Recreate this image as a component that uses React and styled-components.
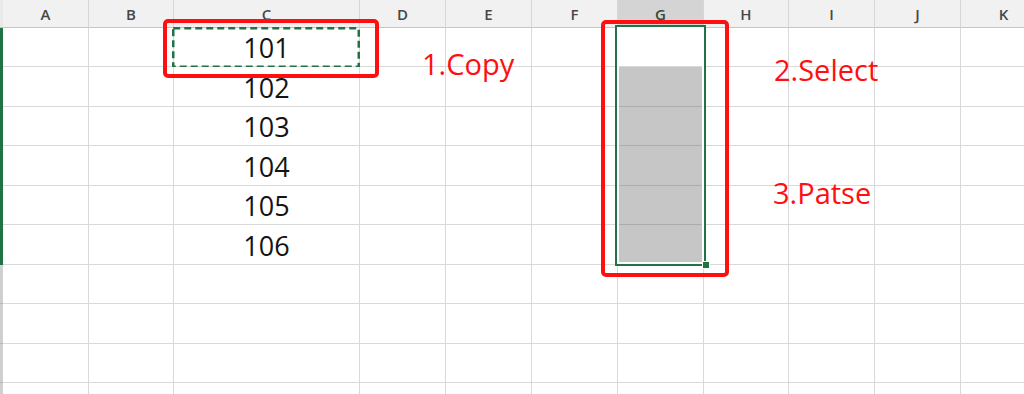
import React from 'react'
import styled, { createGlobalStyle } from 'styled-components'

const GlobalStyle = createGlobalStyle`
  html, body {
    margin: 0;
    padding: 0;
    background: #fff;
    overflow: hidden;
  }
`

const EXCEL_GREEN = '#217346'
const MARK_RED = '#ff0f0f'

const COLUMNS = [
  { key: 'A', width: 86 },
  { key: 'B', width: 85 },
  { key: 'C', width: 186 },
  { key: 'D', width: 86 },
  { key: 'E', width: 86 },
  { key: 'F', width: 86 },
  { key: 'G', width: 86 },
  { key: 'H', width: 85 },
  { key: 'I', width: 86 },
  { key: 'J', width: 86 },
  { key: 'K', width: 86 },
]

const ROW_HEIGHTS = [39, 40, 39, 40, 39, 40, 39, 40, 39, 40]

const VALUES = { C: [101, 102, 103, 104, 105, 106] }

// cells of column G under the selection, below the active cell
const SHADED_ROWS = [1, 2, 3, 4, 5]

const NOTES = [
  { text: '1.Copy', left: 422, top: 49 },
  { text: '2.Select', left: 774, top: 55 },
  { text: '3.Patse', left: 773, top: 178 },
]

const Sheet = styled.div`
  position: relative;
  display: grid;
  grid-template-columns: 3px ${COLUMNS.map(c => `${c.width}px`).join(' ')};
  grid-template-rows: 28px ${ROW_HEIGHTS.map(h => `${h}px`).join(' ')};
  width: max-content;
  height: 394px;
  overflow: hidden;
`

const Corner = styled.div`
  background: #e9e9e9;
  border-bottom: 1px solid #c6c6c6;
`

const RowEdge = styled.div`
  background: ${p => (p.$active ? EXCEL_GREEN : '#cfcfcf')};
  border-bottom: 1px solid ${p => (p.$active ? EXCEL_GREEN : '#b8b8b8')};
`

const ColHead = styled.div`
  box-sizing: border-box;
  display: flex;
  justify-content: center;
  align-items: flex-start;
  padding-top: 7px;
  background: ${p => (p.$active ? '#d4d4d4' : '#f1f1f1')};
  border-right: 1px solid #d6d6d6;
  border-bottom: 1px solid #c6c6c6;
  font-family: "Open Sans", "Noto Sans", sans-serif;
  font-size: 15px;
  line-height: 15px;
  font-weight: 600;
  color: ${p => (p.$active ? '#2d4a3a' : '#474747')};
`

const Cell = styled.div`
  position: relative;
  box-sizing: border-box;
  display: flex;
  justify-content: center;
  align-items: flex-end;
  padding-bottom: 5px;
  background: ${p => (p.$shaded ? '#c6c6c6' : '#fff')};
  border-right: 1px solid #d9d9d9;
  border-bottom: 1px solid ${p => (p.$shaded ? '#acacac' : '#d9d9d9')};
  font-family: "Open Sans", "Noto Sans", sans-serif;
  font-size: 27px;
  line-height: 27px;
  color: #141414;
`

// dashed "marching ants" around a copied cell
const Marquee = styled.svg`
  position: absolute;
  left: -2px;
  top: -1px;
  overflow: visible;
  pointer-events: none;
`

// red hand-drawn callout frames
const Callout = styled.div`
  position: absolute;
  box-sizing: border-box;
  border: 4px solid ${MARK_RED};
  border-radius: 5px;
  pointer-events: none;
`

const Selection = styled.div`
  position: absolute;
  left: 615px;
  top: 25px;
  width: 91px;
  height: 241px;
  box-sizing: border-box;
  border: 2px solid ${EXCEL_GREEN};
  box-shadow: inset 0 0 0 2px #fff;
`

const FillHandle = styled.div`
  position: absolute;
  right: -6px;
  bottom: -5px;
  width: 8px;
  height: 8px;
  box-sizing: border-box;
  background: ${EXCEL_GREEN};
  border: 1px solid #fff;
`

const Note = styled.span`
  position: absolute;
  font-family: "Open Sans", "Noto Sans", sans-serif;
  font-size: 29px;
  line-height: 29px;
  color: ${MARK_RED};
  white-space: nowrap;
`

const CopiedMark = () => (
  <Marquee width="188" height="41">
    <rect
      x="1.25"
      y="1.25"
      width="185.5"
      height="38.5"
      fill="none"
      stroke={EXCEL_GREEN}
      strokeWidth="2.5"
      strokeDasharray="7 4"
    />
  </Marquee>
)

const App = () => (
  <>
    <GlobalStyle />
    <Sheet>
      <Corner />
      {COLUMNS.map(col => (
        <ColHead key={col.key} $active={col.key === 'G'}>{col.key}</ColHead>
      ))}
      {ROW_HEIGHTS.map((_, r) => (
        <React.Fragment key={r}>
          <RowEdge $active={r < 6} />
          {COLUMNS.map(col => (
            <Cell key={col.key} $shaded={col.key === 'G' && SHADED_ROWS.includes(r)}>
              {VALUES[col.key] ? VALUES[col.key][r] : null}
              {col.key === 'C' && r === 0 && <CopiedMark />}
            </Cell>
          ))}
        </React.Fragment>
      ))}

      <Callout style={{ left: 163, top: 19, width: 216, height: 59 }} />

      <Selection>
        <FillHandle />
      </Selection>
      <Callout style={{ left: 601, top: 20, width: 128, height: 257 }} />

      {NOTES.map(n => (
        <Note key={n.text} style={{ left: n.left, top: n.top }}>{n.text}</Note>
      ))}
    </Sheet>
  </>
)

export default App
